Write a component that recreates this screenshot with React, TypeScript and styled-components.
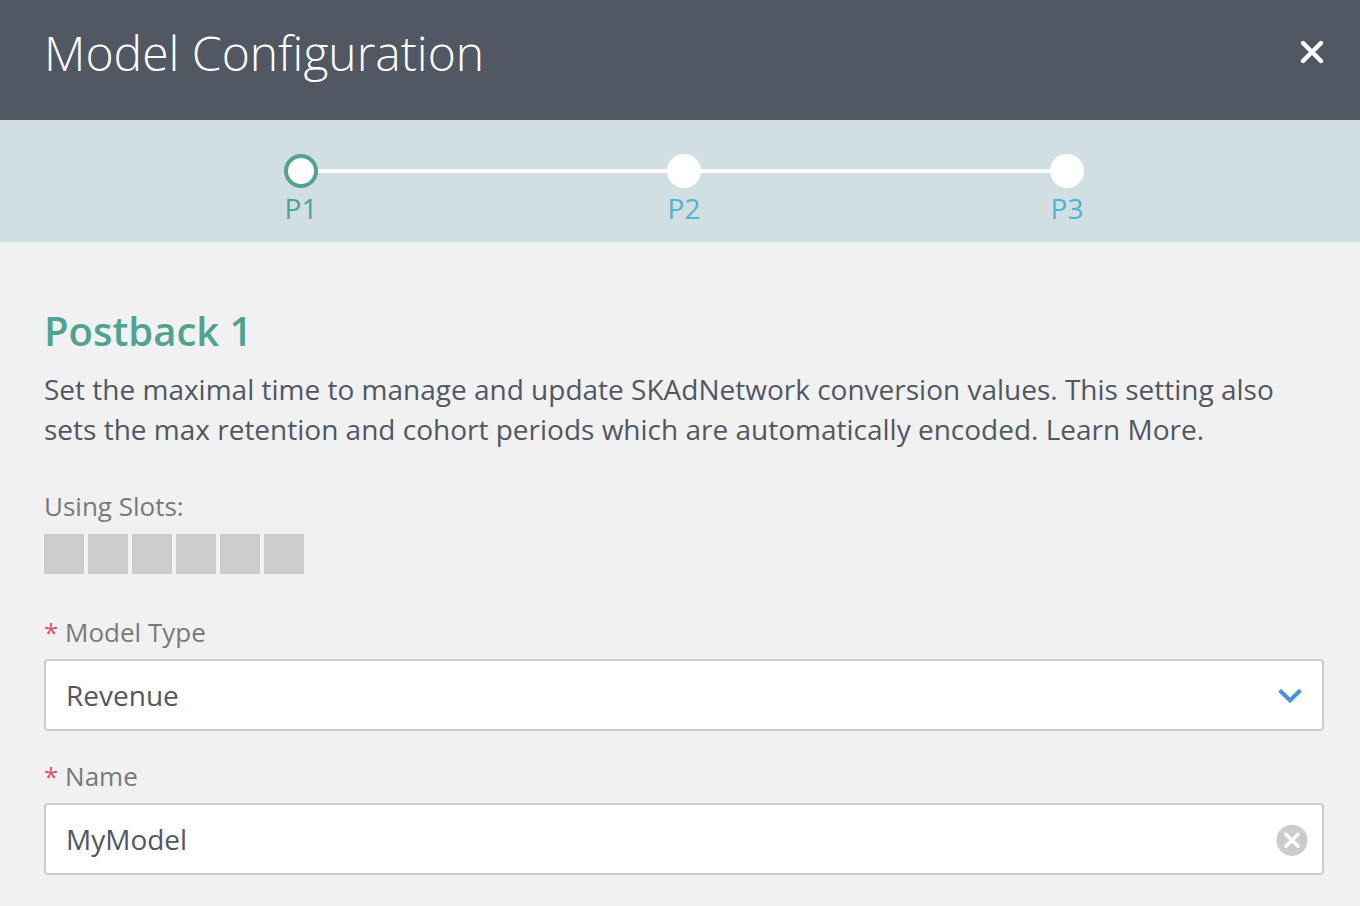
import React from "react";
import styled, { createGlobalStyle } from "styled-components";

const Global = createGlobalStyle`
  * { box-sizing: border-box; }
  body { margin: 0; background: #f1f1f1; color: #525762; font-family: "Open Sans", sans-serif; font-size: 28px; line-height: 40px; }
  button, input, select { font: inherit; color: inherit; }
`;

const Header = styled.header`
  display: flex;
  justify-content: space-between;
  align-items: flex-start;
  height: 120px;
  padding: 20px 32px 0 44px;
  background: #525863;
  color: #fff;
`;
const Title = styled.h1`
  margin: 0;
  font-size: 48px;
  line-height: 66px;
  font-weight: 300;
`;
const IconButton = styled.button`
  display: flex;
  padding: 4px;
  border: 0;
  background: none;
  cursor: pointer;
`;
const CloseButton = styled(IconButton)`
  margin-top: 16px;
`;
const Stepper = styled.nav`
  background: #d1dee2;
  padding: 34px 0 14px;
`;
const Steps = styled.ol`
  display: flex;
  justify-content: center;
  margin: 0 276px 0 284px;
  padding: 0;
  list-style: none;
`;
const Step = styled.li`
  display: flex;
  flex-direction: column;
  align-items: center;
  width: 34px;
`;
const Line = styled.li`
  flex: 1;
  height: 4px;
  margin-top: 15px;
  background: #fff;
`;
const Dot = styled.span<{ $active?: boolean }>`
  width: 34px;
  height: 34px;
  border-radius: 50%;
  background: #fff;
  border: 4px solid ${(p) => (p.$active ? "#4fa390" : "#fff")};
`;
const StepLink = styled.a<{ $active?: boolean }>`
  display: flex;
  flex-direction: column;
  align-items: center;
  color: ${(p) => (p.$active ? "#4fa390" : "#4fb4d0")};
  text-decoration: none;
  line-height: 40px;
`;
const Main = styled.main`
  padding: 63px 36px 24px 44px;
`;
const Heading = styled.h2`
  margin: 0;
  color: #4fa390;
  font-size: 40px;
  line-height: 52px;
  font-weight: 600;
`;
const Description = styled.p`
  margin: 12px 0 39px;
`;
const SlotsLabel = styled.div`
  color: #797979;
  font-size: 26px;
  line-height: 36px;
`;
const Slots = styled.div`
  display: flex;
  gap: 4px;
  margin: 10px 0 40px;
`;
const Slot = styled.span`
  width: 40px;
  height: 40px;
  background: #ccc;
`;
const Field = styled.div`
  display: flex;
  flex-direction: column;
  gap: 9px;
  margin-bottom: 27px;
`;
const Label = styled.label`
  color: #797979;
  font-size: 26px;
  line-height: 36px;
`;
const Required = styled.span`
  color: #e05163;
`;
const ControlBox = styled.div`
  display: grid;
  grid-template-columns: 1fr 60px;
  align-items: center;
  height: 72px;
  border: 2px solid #ccc;
  border-radius: 4px;
  background: #fff;
`;
const Select = styled.select`
  grid-area: 1 / 1 / 2 / 3;
  height: 68px;
  padding: 0 60px 0 20px;
  border: 0;
  background: none;
  appearance: none;
  outline: none;
`;
const Input = styled.input`
  width: 100%;
  height: 68px;
  padding: 0 20px;
  border: 0;
  background: none;
  outline: none;
`;
const Chevron = styled.svg`
  grid-area: 1 / 2;
  justify-self: end;
  margin-right: 20px;
  pointer-events: none;
`;
const ClearButton = styled(IconButton)`
  justify-self: end;
  margin-right: 10px;
`;

const steps = ["P1", "P2", "P3"];

export default function App() {
  return (
    <>
      <Global />
      <Header>
        <Title>Model Configuration</Title>
        <CloseButton type="button" aria-label="Close">
          <svg width="24" height="24" viewBox="0 0 24 24">
            <path d="M3 3L21 21M21 3L3 21" stroke="#fff" strokeWidth="4.4" strokeLinecap="round" />
          </svg>
        </CloseButton>
      </Header>
      <Stepper aria-label="Postbacks">
        <Steps>
          {steps.map((name, i) => (
            <React.Fragment key={name}>
              {i > 0 && <Line role="presentation" />}
              <Step>
                <StepLink href={"#" + name} $active={i === 0}>
                  <Dot $active={i === 0} />
                  {name}
                </StepLink>
              </Step>
            </React.Fragment>
          ))}
        </Steps>
      </Stepper>
      <Main>
        <Heading>Postback 1</Heading>
        <Description>
          Set the maximal time to manage and update SKAdNetwork conversion values. This setting also sets the max
          retention and cohort periods which are automatically encoded. Learn More.
        </Description>
        <SlotsLabel>Using Slots:</SlotsLabel>
        <Slots>
          {Array.from({ length: 6 }, (_, i) => (
            <Slot key={i} />
          ))}
        </Slots>
        <Field>
          <Label htmlFor="type"><Required>*</Required> Model Type</Label>
          <ControlBox>
            <Select id="type" defaultValue="Revenue">
              <option>Revenue</option>
            </Select>
            <Chevron width="24" height="18" viewBox="0 0 24 18">
              <path d="M1.6 4.2L12 14.4L22.4 4.2" fill="none" stroke="#4a90e2" strokeWidth="4" />
            </Chevron>
          </ControlBox>
        </Field>
        <Field>
          <Label htmlFor="name"><Required>*</Required> Name</Label>
          <ControlBox>
            <Input id="name" defaultValue="MyModel" />
            <ClearButton type="button" aria-label="Clear name">
              <svg width="32" height="34" viewBox="0 0 32 34">
                <circle cx="16" cy="18.3" r="15.6" fill="#ccc" />
                <path d="M10 12.3L22 24.3M22 12.3L10 24.3" stroke="#fff" strokeWidth="3.4" strokeLinecap="round" />
              </svg>
            </ClearButton>
          </ControlBox>
        </Field>
      </Main>
    </>
  );
}
